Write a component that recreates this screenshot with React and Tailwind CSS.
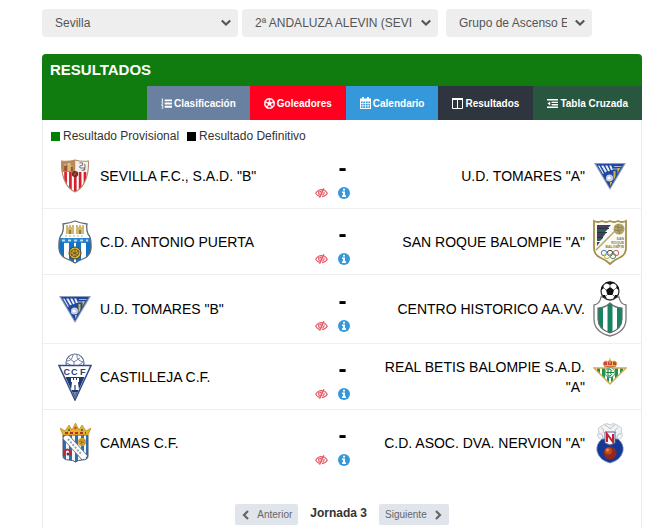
import React from "react";
import { FaRegFutbol } from "react-icons/fa";

function SevillaCrest() {
  return (
    <svg width="28" height="34" viewBox="0 0 26 34" preserveAspectRatio="none" aria-hidden="true">
      <defs>
        <clipPath id="sev"><path d="M0 2Q7 3 13 1Q19 3 26 2Q26 14 22 23Q19 30 13 33Q7 30 4 23Q0 14 0 2Z" /></clipPath>
      </defs>
      <g clipPath="url(#sev)">
        <rect width="26" height="34" fill="#fff" />
        <path d="M3 13h2.500v20H3zM7.500 13h2.500v20H7.500zM12 13h2.500v20H12zM16.500 13H19v20h-2.500zM21 13h2.500v20H21z" fill="#d81e2c" />
        <path d="M0 0h13.500v13H0z" fill="#b98a55" />
        <path d="M3 6h3v6H3zM9 6h2v6H9z" fill="#9c5138" />
        <path d="M6 4h3v8H6z" fill="#dcb873" />
        <path d="M3 6h2M9 7h2M7 5h1" stroke="#eedcae" />
        <path d="M13.500 0H26v13H13.500z" fill="#f3f1ee" />
        <path d="M17 4q4-1 3 2q-4 1-2 3h4q1 3-3 2M22 5q1 4-1 6" fill="none" stroke="#77747a" />
      </g>
      <circle cx="13" cy="15" r="3" fill="#6d261f" />
      <path d="M11 14l4 2M14 13l-2 4" stroke="#b46a39" strokeWidth=".6" />
      <path d="M.5 2Q7 3 13 1Q19 3 25.500 2Q26 14 22 23Q19 30 13 33Q7 30 4 23Q0 14 .5 2Z" fill="none" stroke="#b68a6a" />
    </svg>
  );
}

function PuertaCrest() {
  return (
    <svg width="34" height="44" viewBox="0 0 34 44" aria-hidden="true">
      <defs>
        <clipPath id="pue"><path d="M5 4Q12 3 17 1Q22 3 29 4Q28 9 30 14Q33 17 33 24Q34 34 27 38Q22 40 17 43Q12 40 7 38Q0 34 1 24Q1 17 4 14Q6 9 5 4Z" /></clipPath>
      </defs>
      <g clipPath="url(#pue)">
        <rect width="34" height="44" fill="#fff" />
        <path d="M0 18h34v5H0z" fill="#2a83cc" />
        <path d="M0 22h6v22H0zM11 22h5v22h-5zM18 22h5v22h-5zM28 22h6v22h-6z" fill="#1273c4" />
        <path d="M4 20.500h26" stroke="#b8dcf2" strokeWidth="2" strokeDasharray="3 3" />
      </g>
      <path d="M8 5h2v2h1V5h2v2h1V5h2v9H8zM18 5h2v2h1V5h2v2h1V5h2v9h-8z" fill="#d3ba70" />
      <path d="M11 10h2v4h-2zM21 10h2v4h-2z" fill="#947c3c" />
      <path d="M7 16h20" stroke="#cbb369" strokeDasharray="2 2" />
      <circle cx="17" cy="33" r="6" fill="#ddb535" stroke="#4b4020" />
      <path d="M13 31l4-2 4 2-1 4-3 2-4-2zM17 29v8M13 31l7 4M21 31l-8 4" fill="none" stroke="#655022" strokeWidth=".9" />
      <path d="M5 4Q12 3 17 1Q22 3 29 4Q28 9 30 14Q33 17 33 24Q34 34 27 38Q22 40 17 43Q12 40 7 38Q0 34 1 24Q1 17 4 14Q6 9 5 4Z" fill="none" stroke="#5d6b76" strokeWidth="1.300" />
    </svg>
  );
}

function TomaresCrest({ id }) {
  return (
    <svg width="32" height="28" viewBox="0 0 32 28" aria-hidden="true">
      <defs>
        <clipPath id={id}><path d="M4 3.500h24L16 24z" /></clipPath>
      </defs>
      <path d="M0 1h32L16 28z" fill="#8f9dba" />
      <path d="M2 2h28L16 26z" fill="#2148a0" />
      <g clipPath={`url(#${id})`}>
        <path d="M4 3l5 9M8 3l4 7M12 3l3 6M16 3l2 5" stroke="#e9eef6" strokeWidth="2" />
        <path d="M20 4.500h9M19 7h8" stroke="#a4b5d8" />
        <path d="M20.500 9v12M24.500 6v9M12 17v5M17 20v6" stroke="#d6b83c" strokeWidth="2" />
      </g>
      <circle cx="15.500" cy="16" r="3.500" fill="#cad5ea" />
      <path d="M13 15l2-1 2 1v2l-2 1-2-1z" fill="#fff" stroke="#8fa2c9" strokeWidth=".4" />
    </svg>
  );
}

function CastillejaCrest() {
  return (
    <svg width="34" height="48" viewBox="0 0 34 48" aria-hidden="true">
      <circle cx="17" cy="10" r="9" fill="#fff" stroke="#59698f" strokeWidth="1.200" />
      <path d="M9 8q5 0 6-6M19 2q-1 5 6 7M11 5l5 4 6-4M16 9v4M9 10l5 3M25 9l-5 4" fill="none" stroke="#7180a3" />
      <path d="M1 12.500h32L17 47z" fill="#fff" stroke="#344d87" strokeWidth="1.500" />
      <path d="M7.500 24h19L17 45z" fill="#1c3974" />
      <text x="5.500" y="21.500" fontFamily="Liberation Sans, sans-serif" fontWeight="700" fontSize="9" fill="#253f7c">C</text>
      <text x="13" y="21.500" fontFamily="Liberation Sans, sans-serif" fontWeight="700" fontSize="9" fill="#253f7c">C</text>
      <text x="22" y="21.500" fontFamily="Liberation Sans, sans-serif" fontWeight="700" fontSize="9" fill="#253f7c">F</text>
      <path d="M13 25h2v2h1v-2h2v2h1v-2h2v4h-1l1 8h-8l1-8h-1z" fill="#fff" />
      <path d="M16 32h2v5h-2z" fill="#7b8cb0" />
      <path d="M15 39h4l-2 5z" fill="#7487b1" />
    </svg>
  );
}

function CamasCrest() {
  return (
    <svg width="31" height="41" viewBox="0 0 31 41" aria-hidden="true">
      <defs>
        <clipPath id="cam"><path d="M3 13h25v21q0 4-6 4-4 0-6.500 2Q13 38 9 38q-6 0-6-4z" /></clipPath>
      </defs>
      <g clipPath="url(#cam)">
        <path d="M3 13h25v28H3z" fill="#f4f7fa" />
        <path d="M3 13h3v28H3zM9 13h3v28H9zM15 13h3v28h-3zM21 13h3v28h-3zM26 13h2v28h-2z" fill="#2f6eb2" />
        <path d="M5 14l20 22" stroke="#6b7480" strokeWidth="7.500" />
        <path d="M5 14l20 22" stroke="#fff" strokeWidth="6" />
        <path d="M8 17l14 16" stroke="#9aa1aa" strokeWidth="2" strokeDasharray="2 1.500" />
      </g>
      <circle cx="22" cy="20" r="4" fill="#d9a32c" />
      <path d="M19 19l6 2M21 17l1 6M25 18l-5 4" stroke="#956b1d" strokeWidth=".7" />
      <path d="M4 34v-4q3-5 7 0v4" fill="none" stroke="#bd2831" strokeWidth="2" />
      <circle cx="8" cy="32" r="1.500" fill="#3c4354" />
      <path d="M3 13h25v21q0 4-6 4-4 0-6.500 2Q13 38 9 38q-6 0-6-4z" fill="none" stroke="#4b596b" />
      <path d="M3 13L0 6l5 3 4-6 3 5 3.500-7L19 8l3-5 4 6 5-3-3 7z" fill="#e4b22e" stroke="#b98324" strokeWidth=".7" />
      <path d="M5 11h21" stroke="#b92f2c" strokeWidth="2" strokeDasharray="3 2" />
      <circle cx="15.500" cy="6" r="1.200" fill="#d3322e" />
      <path d="M8 8h2M21 8h2" stroke="#398058" strokeWidth="2" />
    </svg>
  );
}

function SanRoqueCrest() {
  return (
    <svg width="34" height="46" viewBox="0 0 34 46" aria-hidden="true">
      <path d="M1 2q4 2 8 0 4 2 8 0 4 2 8 0 4 2 8 0v27q0 7-7 10-5 2-9 6-4-4-9-6-7-3-7-10z" fill="#faf9f4" stroke="#a4914c" strokeWidth="1.800" />
      <path d="M4 6h14l-3 3H4z" fill="#493b64" />
      <path d="M4 10h11l-3 3H4z" fill="#24604f" />
      <path d="M4 14h9l-3 4H4z" fill="#493b64" />
      <path d="M4 19h6l-3 3H4z" fill="#24604f" />
      <path d="M4 23h3l-3 4z" fill="#493b64" />
      <path d="M4 9.500h12M4 13.500h10M4 18.500h6" stroke="#2c3340" />
      <path d="M3 31L24 10" stroke="#b4a466" strokeWidth="1.500" />
      <circle cx="26" cy="10" r="5.500" fill="#b1a36a" />
      <path d="M22 7q4 3 8 1M21 11q5 2 9-1M25 5q-1 5 2 10" fill="none" stroke="#827442" strokeWidth=".7" />
      <g fontFamily="Liberation Sans, sans-serif" fontWeight="700" fontSize="3.500" fill="#827b54" textAnchor="end">
        <text x="31" y="21">SAN</text>
        <text x="31" y="25">ROQUE</text>
        <text x="31" y="29">BALOMPIE</text>
      </g>
      <g fill="none" strokeWidth="1">
        <circle cx="11" cy="34" r="2.700" stroke="#4a87ba" />
        <circle cx="17" cy="34" r="2.700" stroke="#4d4a4d" />
        <circle cx="23" cy="34" r="2.700" stroke="#c46269" />
        <circle cx="14" cy="37" r="2.700" stroke="#d0b651" />
        <circle cx="20" cy="37" r="2.700" stroke="#529676" />
      </g>
    </svg>
  );
}

function CentroCrest() {
  return (
    <svg width="34" height="56" viewBox="0 0 34 56" aria-hidden="true">
      <defs>
        <clipPath id="cen"><path d="M5 27q7 0 12-5 5 5 12 5v11q0 10-12 14Q5 48 5 38z" /></clipPath>
      </defs>
      <path d="M1 24q6-1 7-8h18q1 7 7 8v14q0 13-16 17Q1 51 1 38z" fill="#fff" stroke="#777" strokeWidth="1.300" />
      <g clipPath="url(#cen)">
        <path d="M5 20h24v34H5z" fill="#fff" />
        <path d="M5 20h5v34H5zM14.500 20h5v34h-5zM24 20h5v34h-5z" fill="#168463" />
      </g>
      <path d="M5 27q7 0 12-5 5 5 12 5v11q0 10-12 14Q5 48 5 38z" fill="none" stroke="#626b67" strokeWidth="1.200" />
      <circle cx="17" cy="10" r="9" fill="#fff" stroke="#333" strokeWidth="1.300" />
      <path d="M17 6l4 3-1.500 5h-5L13 9zM12 1.500L17 4l5-2.500-5-1zM8 9.500L11 7l-1-3-2 3zM26 9.500L23 7l1-3 2 3zM10 14l2 0 2 4-4-2zM24 14l-2 0-2 4 4-2z" fill="#111" />
      <path d="M17 3v3M13 9l-3-3M21 9l3-3M14.500 13.500L12 16M19.500 13.500L22 16" stroke="#555" strokeWidth=".8" />
    </svg>
  );
}

function BetisCrest() {
  return (
    <svg width="34" height="40" viewBox="0 0 34 40" aria-hidden="true">
      <defs>
        <clipPath id="bet"><path d="M1 11h32L17 27z" /></clipPath>
      </defs>
      <g clipPath="url(#bet)">
        <path d="M0 10h34v18H0z" fill="#fff" />
        <path d="M4 10h3v18H4zM9 10h3v18H9zM14 10h2v18h-2zM18 10h2v18h-2zM22 10h3v18h-3zM27 10h3v18h-3z" fill="#1a9454" />
      </g>
      <path d="M1 11h32L17 27z" fill="none" stroke="#d5ac55" strokeWidth="1.500" />
      <circle cx="17" cy="15.500" r="5" fill="#e8f4e9" stroke="#4a9b68" />
      <path d="M15 12v7h2q3-1 0-3.500 3-1 0-3.500zM13 15.500h8" fill="none" stroke="#168348" />
      <path d="M12 10q-4-5 1-6l2 1q2-4 4 0l2-1q5 1 1 6z" fill="#cf4337" stroke="#d3a643" />
      <path d="M12 8.500h10M17 1v6M14.500 5v3M19.500 5v3" stroke="#e4b956" />
    </svg>
  );
}

function NervionCrest() {
  return (
    <svg width="28" height="42" viewBox="0 0 28 42" aria-hidden="true">
      <path d="M4 17q-4-3-1-7Q1 5 6 4q4-4 8-1 4-3 8 1 5 1 3 6 3 4-1 7z" fill="#f1f3f4" stroke="#c5cacf" />
      <path d="M5 6q4 1 2 5M22 6q-4 1-2 5M9 3q3 1 5 4 2-3 5-4M3 12q4-1 4 4M25 12q-4-1-4 4" fill="none" stroke="#b6bcc3" />
      <path d="M6 17Q0 22 1 29q2 9 13 12 11-3 13-12 1-7-5-12z" fill="#153898" stroke="#7b8ca7" strokeWidth=".8" />
      <path d="M9 10h10v11l-5 2-5-2z" fill="#fff" stroke="#53659a" />
      <path d="M11 20v-8l6 8v-8" fill="none" stroke="#c51e36" strokeWidth="2" />
      <circle cx="14" cy="31" r="6.500" fill="#8f2a1c" />
      <circle cx="12.500" cy="29" r="3.500" fill="#c04a28" />
      <circle cx="11.500" cy="28" r="1.500" fill="#e68b50" />
    </svg>
  );
}

function EyeSlash() {
  return (
    <svg width="13" height="10" viewBox="0 0 13 10" fill="none" stroke="#e85561" strokeWidth="1.100" aria-hidden="true">
      <path d="M4.800 8.500Q2.500 8 .7 5.200 3 1.500 6.500 1.500h1.200M9.300 2Q11 3 12.300 5.200 10.500 8.300 7 8.600" />
      <path d="M4.600 7Q2.800 5 4.300 2.600M6.700 2.900Q5.200 3 5.200 4.500M9.200 3.800Q9.500 5.800 7.500 7" />
      <path d="M8.900.4L4.500 9.600" strokeWidth="1.500" />
    </svg>
  );
}

function InfoIcon() {
  return (
    <svg width="12" height="12" viewBox="0 0 12 12" aria-hidden="true">
      <circle cx="6" cy="6" r="6" fill="#3498db" />
      <path d="M5 1.800h2v1.700H5zM4 4.500h3v3.700h1V10H4V8.200h1V6H4z" fill="#fff" />
    </svg>
  );
}

function Chevron({ d, ...rest }) {
  return (
    <svg width="10" height="10" viewBox="0 0 10 10" fill="none" stroke="currentColor" strokeWidth="2.200" aria-hidden="true" {...rest}>
      <path d={d} />
    </svg>
  );
}

function ListIcon() {
  return (
    <svg width="11" height="11" viewBox="0 0 12 12" fill="currentColor" aria-hidden="true">
      <path d="M4 1.500h8v2H4zM4 5h8v2H4zM4 8.500h8v2H4zM1 .5h1v3h.6v.5H.5v-.5H1V1.400H.5zM.4 4.600h2v1.500l-1 .8h1v.5h-2v-.9l1.100-.9v-.4H.4zM.4 8h2v3.500h-2V11h1.200v-.9H.8v-.6h.8v-.9H.4z" />
    </svg>
  );
}

function BallIcon() {
  return <FaRegFutbol className="size-[11px]" strokeWidth="20" stroke="currentColor" />;
}

function CalendarIcon() {
  return (
    <svg width="11" height="12" viewBox="0 0 11 12" fill="currentColor" fillRule="evenodd" aria-hidden="true">
      <path d="M2 0h2v1.500h3V0h2v1.500h2V12H0V1.500h2zM1 4.500v1.700h1.600V4.500zM3.300 4.500v1.700h1.900V4.500zM5.900 4.500v1.700h1.800V4.500zM8.400 4.500v1.700H10V4.500zM1 6.900v1.700h1.600V6.900zM3.300 6.900v1.700h1.900V6.900zM5.900 6.900v1.700h1.800V6.900zM8.400 6.900v1.700H10V6.900zM1 9.300V11h1.600V9.300zM3.300 9.300V11h1.900V9.300zM5.900 9.300V11h1.800V9.300zM8.400 9.300V11H10V9.300z" />
    </svg>
  );
}

function ColumnsIcon() {
  return (
    <svg width="11" height="11" viewBox="0 0 11 11" fill="none" stroke="currentColor" aria-hidden="true">
      <path d="M.5 1v9.500h10V1M5.500 1v9.500" />
      <path d="M0 1h11" strokeWidth="2" />
    </svg>
  );
}

function OutdentIcon() {
  return (
    <svg width="11" height="11" viewBox="0 0 12 12" fill="currentColor" aria-hidden="true">
      <path d="M0 1h12v1.600H0zM5 4h7v1.500H5zM5 6.600h7v1.500H5zM0 9.400h12V11H0zM3.500 3.800v4.400L.5 6z" />
    </svg>
  );
}

const tabs = [
  { label: "Clasificación", Icon: ListIcon, color: "bg-[#6980a0]" },
  { label: "Goleadores", Icon: BallIcon, color: "bg-[#ff001e]" },
  { label: "Calendario", Icon: CalendarIcon, color: "bg-[#3498db]" },
  { label: "Resultados", Icon: ColumnsIcon, color: "bg-[#2f353e]" },
  { label: "Tabla Cruzada", Icon: OutdentIcon, color: "bg-[#29563f]" },
];

const matches = [
  { home: 'SEVILLA F.C., S.A.D. "B"', away: 'U.D. TOMARES "A"', homeCrest: <SevillaCrest />, awayCrest: <TomaresCrest id="tomA" /> },
  { home: "C.D. ANTONIO PUERTA", away: 'SAN ROQUE BALOMPIE "A"', homeCrest: <PuertaCrest />, awayCrest: <SanRoqueCrest /> },
  { home: 'U.D. TOMARES "B"', away: "CENTRO HISTORICO AA.VV.", homeCrest: <TomaresCrest id="tomB" />, awayCrest: <CentroCrest /> },
  { home: "CASTILLEJA C.F.", away: 'REAL BETIS BALOMPIE S.A.D. "A"', homeCrest: <CastillejaCrest />, awayCrest: <BetisCrest /> },
  { home: "CAMAS C.F.", away: 'C.D. ASOC. DVA. NERVION "A"', homeCrest: <CamasCrest />, awayCrest: <NervionCrest /> },
];

function Filter({ label, value, width }) {
  return (
    <div className={`relative h-7 ${width}`}>
      <select aria-label={label} className="h-full w-full appearance-none rounded-sm bg-[#eee] pl-[13px] pr-[25px] text-xs text-[#555]">
        <option>{value}</option>
      </select>
      <Chevron d="M.8 2.500L5 6.500 9.200 2.500" className="pointer-events-none absolute right-[7px] top-[9px] text-[#555]" />
    </div>
  );
}

function MatchRow({ match }) {
  return (
    <li className="flex min-h-[66px] items-center border-b border-[#eef0f3] py-1.5 pl-[15px] pr-3.5 last:border-transparent">
      <div className="flex min-w-0 flex-1 items-center gap-2">
        <span className="flex w-[34px] shrink-0 justify-center">{match.homeCrest}</span>
        <span>{match.home}</span>
      </div>
      <div className="flex w-[70px] shrink-0 flex-col items-center">
        <span className="text-2xl font-bold leading-[34px]">-</span>
        <div className="flex h-4 items-center gap-2.5 pr-5">
          <button type="button" aria-label="Oculto"><EyeSlash /></button>
          <button type="button" aria-label="Información"><InfoIcon /></button>
        </div>
      </div>
      <div className="flex min-w-0 flex-1 items-center justify-end gap-2">
        <span className="text-right">{match.away}</span>
        <span className="flex w-[34px] shrink-0 justify-center">{match.awayCrest}</span>
      </div>
    </li>
  );
}

export default function App() {
  return (
    <main className="bg-white pl-[42px] pr-5 font-['Liberation_Sans',Arial,sans-serif] text-[#333]">
      <form className="flex pt-[9px]">
        <Filter label="Provincia" value="Sevilla" width="w-[196px] mr-1" />
        <Filter label="Competición" value="2ª ANDALUZA ALEVIN (SEVI" width="w-[196px] mr-2" />
        <Filter label="Grupo" value="Grupo de Ascenso E" width="w-[146px]" />
      </form>

      <section className="mt-[17px]">
        <header className="rounded-t-sm bg-[#107c10] text-white">
          <h1 className="pl-2 text-[15px] font-bold leading-8">RESULTADOS</h1>
          <nav className="flex justify-end">
            {tabs.map(({ label, Icon, color }) => (
              <a key={label} href="#" className={`flex h-[34px] items-center gap-0.5 whitespace-nowrap px-3.5 text-[10px] font-bold ${color}`}>
                <Icon />
                {label}
              </a>
            ))}
          </nav>
        </header>

        <div className="border-x border-[#e9ebee] pb-[3px]">
          <div className="flex gap-2 pl-2 pt-[9px] text-xs leading-[14px]">
            <span className="flex items-center gap-[3px]"><i className="size-[9px] bg-[#008000]" />Resultado Provisional</span>
            <span className="flex items-center gap-[3px]"><i className="size-[9px] bg-black" />Resultado Definitivo</span>
          </div>

          <ul className="text-sm leading-5 text-black">
            {matches.map((match) => (
              <MatchRow key={match.home} match={match} />
            ))}
          </ul>

          <nav className="mt-7 flex items-start justify-center gap-3 text-[10px] text-[#666]">
            <button type="button" className="flex h-[21px] items-center gap-1.5 rounded-xs bg-[#e0e5ec] px-1.5">
              <Chevron d="M7 1L3 5 7 9" />
              Anterior
            </button>
            <strong className="text-xs leading-[18px] text-[#333]">Jornada 3</strong>
            <button type="button" className="flex h-[21px] items-center gap-1.5 rounded-xs bg-[#e0e5ec] px-1.5">
              Siguiente
              <Chevron d="M3 1L7 5 3 9" />
            </button>
          </nav>
        </div>
      </section>
    </main>
  );
}
